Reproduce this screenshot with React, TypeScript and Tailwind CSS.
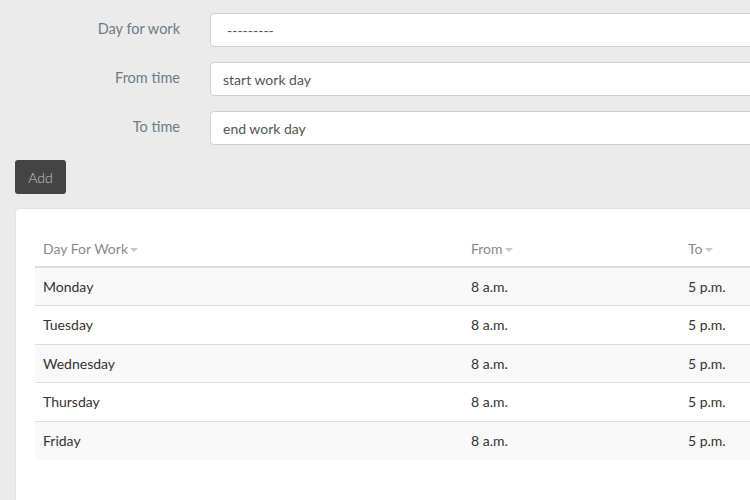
import React from "react";

const days = ["Monday", "Tuesday", "Wednesday", "Thursday", "Friday"];

function Caret() {
  return (
    <svg width="8" height="5" viewBox="0 0 8 5" className="ml-[2px] inline-block">
      <path d="M0 0 L8 0 L4 4 Z" fill="#c8c8c8" />
    </svg>
  );
}

function FormRow({ label, value, pad }: { label: string; value: string; pad: string }) {
  return (
    <div className="flex items-center">
      <label className="w-[165px] shrink-0 text-right text-[14.5px] text-[#6d7b87] -mt-[2px]">{label}</label>
      <div
        className={`ml-[30px] h-[34px] flex-1 flex items-center rounded-[4px] border border-[#cfcfcf] bg-white text-[14px] text-[#555] ${pad}`}
      >
        {value}
      </div>
    </div>
  );
}

export default function App() {
  return (
    <div className="w-[750px] h-[500px] overflow-hidden bg-[#ebebeb]" style={{ fontFamily: "Lato, 'Open Sans', sans-serif" }}>
      <div className="w-[1000px] px-[15px] pt-[13px]">
        <div className="flex flex-col gap-[15px] -mr-[15px]">
          <FormRow label="Day for work" value="---------" pad="pl-[16px]" />
          <FormRow label="From time" value="start work day" pad="pl-[12px]" />
          <FormRow label="To time" value="end work day" pad="pl-[12px]" />
        </div>
        <button className="mt-[15px] h-[34px] w-[51px] rounded-[3px] bg-[#444] text-[14px] text-[#c4c4c4] font-light">
          Add
        </button>
        <div className="mt-[14px] rounded-[4px] border border-[#e2e2e2] bg-white pl-[19px] pt-[19px] h-[320px]">
          <table className="w-[900px] border-collapse text-[14px]">
            <thead>
              <tr className="border-b-2 border-[#dddddd]">
                <th className="w-[428px] h-[39px] px-[8px] pb-[7px] align-bottom text-left font-normal text-[#8a8a8a]">
                  Day For Work<Caret />
                </th>
                <th className="w-[217px] px-[8px] pb-[7px] align-bottom text-left font-normal text-[#8a8a8a]">
                  From<Caret />
                </th>
                <th className="px-[8px] pb-[7px] align-bottom text-left font-normal text-[#8a8a8a]">
                  To<Caret />
                </th>
              </tr>
            </thead>
            <tbody>
              {days.map((d, i) => (
                <tr
                  key={d}
                  className={`${i % 2 === 0 ? "bg-[#f9f9f9]" : "bg-white"} ${i < days.length - 1 ? "border-b border-[#dddddd]" : ""}`}
                >
                  <td className="h-[38.5px] px-[8px] text-[#333]">{d}</td>
                  <td className="px-[8px] text-[#333]">8 a.m.</td>
                  <td className="px-[8px] text-[#333]">5 p.m.</td>
                </tr>
              ))}
            </tbody>
          </table>
        </div>
      </div>
    </div>
  );
}
